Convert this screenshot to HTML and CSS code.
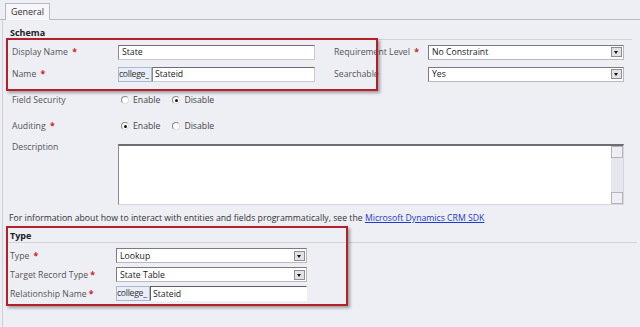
FILE: index.html
```html
<!DOCTYPE html>
<html lang="en">
<head>
    <meta charset="UTF-8">
    <title>Field - General</title>
    <link rel="stylesheet" href="styles.css">
</head>
<body>
    <div class="tabs">
        <div class="tab">General</div>
    </div>

    <div class="panel">
        <div class="section-title">Schema</div>
        <div class="section-line"></div>

        <div class="schema-rows">
            <div class="row">
                <div class="label">Display Name <span class="req">*</span></div>
                <div class="input w-main"><span class="val">State</span></div>
                <div class="label label-right">Requirement Level <span class="req">*</span></div>
                <div class="select w-right"><span class="val">No Constraint</span><span class="arrow"></span></div>
            </div>
            <div class="row">
                <div class="label">Name <span class="req">*</span></div>
                <div class="prefixed w-main">
                    <span class="prefix">college_</span>
                    <div class="input grow"><span class="val">Stateid</span></div>
                </div>
                <div class="label label-right">Searchable</div>
                <div class="select w-right"><span class="val">Yes</span><span class="arrow"></span></div>
            </div>
        </div>

        <div class="row radio-row first-radio">
            <div class="label">Field Security</div>
            <div class="radios">
                <span class="radio"></span><span class="radio-text">Enable</span>
                <span class="radio checked"></span><span class="radio-text">Disable</span>
            </div>
        </div>
        <div class="row radio-row">
            <div class="label">Auditing <span class="req">*</span></div>
            <div class="radios">
                <span class="radio checked"></span><span class="radio-text">Enable</span>
                <span class="radio"></span><span class="radio-text">Disable</span>
            </div>
        </div>

        <div class="row desc-row">
            <div class="label">Description</div>
            <div class="textarea">
                <div class="scroll">
                    <span class="scroll-btn"></span>
                    <span class="scroll-btn"></span>
                </div>
            </div>
        </div>

        <p class="info">For information about how to interact with entities and fields programmatically, see the <a href="#">Microsoft Dynamics CRM SDK</a></p>

        <div class="type-section">
            <div class="section-title type-title">Type</div>
            <div class="section-line type-line"></div>
            <div class="type-row">
                <div class="label">Type <span class="req">*</span></div>
                <div class="select w-type"><span class="val">Lookup</span><span class="arrow"></span></div>
            </div>
            <div class="type-row">
                <div class="label">Target Record Type<span class="req">*</span></div>
                <div class="select w-type"><span class="val">State Table</span><span class="arrow"></span></div>
            </div>
            <div class="type-row">
                <div class="label">Relationship Name<span class="req">*</span></div>
                <div class="prefixed w-type">
                    <span class="prefix">college_</span>
                    <div class="input grow plain"><span class="val">Stateid</span></div>
                </div>
            </div>
        </div>

        <!-- annotation boxes drawn over the form -->
        <div class="highlight hl-schema"></div>
        <div class="highlight hl-type"></div>
    </div>
</body>
</html>
```

FILE: styles.css
```css
body {
    margin: 0;
    background-color: #eeeef5;
    font-family: 'Open Sans', 'Noto Sans', sans-serif;
    font-size: 8.7px;
    color: #444;
    width: 640px;
    height: 327px;
    overflow: hidden;
}
.tabs {
    height: 19px;
    border-bottom: 1px solid #b9b9c4;
    padding-left: 5px;
    display: flex;
    align-items: flex-end;
}
.tab {
    width: 43px;
    height: 16px;
    margin-bottom: -1px;
    border: 1px solid #b9b9c4;
    border-bottom: none;
    background-color: #f7f7fb;
    color: #333;
    font-size: 9px;
    line-height: 16px;
    text-align: center;
}
.panel {
    position: relative;
    border-left: 1px solid #cfcfd8;
    margin-left: 2px;
    height: 307px;
}
.section-title {
    font-weight: bold;
    color: #222;
    padding: 7px 0 0 7px;
    height: 12px;
    line-height: 12px;
    font-size: 9px;
}
.section-line {
    height: 1px;
    background-color: #d2d2da;
    margin: 0 8px 0 3px;
}
.schema-rows {
    padding-top: 1px;
}
.row {
    display: flex;
    align-items: center;
    height: 22px;
    padding-left: 9px;
}
.label {
    width: 106px;
    flex: none;
    color: #555;
}
.label-right {
    width: 94px;
    margin-left: 19px;
}
.req {
    color: #d0202a;
    font-weight: bold;
    margin-left: 2px;
}
.w-main { width: 197px; }
.w-right { width: 196px; }
.w-type { width: 191px; }
.input, .select {
    box-sizing: border-box;
    height: 15px;
    background-color: #fff;
    border: 1px solid #c9c9cf;
    border-top-color: #6c6c72;
    border-left-color: #8a8a90;
    display: flex;
    align-items: center;
    padding-left: 3px;
    color: #222;
    font-size: 8.7px;
    flex: none;
}
.select {
    border-color: #7a7a80;
    border-bottom-color: #b8b8be;
    border-right-color: #b8b8be;
    justify-content: space-between;
    padding-right: 1px;
}
.arrow {
    width: 11px;
    height: 10px;
    box-sizing: border-box;
    border: 1px solid #8d8d93;
    background-color: #e2e2e6;
    position: relative;
}
.arrow::after {
    content: "";
    position: absolute;
    left: 2px;
    top: 3px;
    border-left: 2.5px solid transparent;
    border-right: 2.5px solid transparent;
    border-top: 3px solid #111;
}
.prefixed {
    display: flex;
    height: 15px;
    flex: none;
}
.prefix {
    box-sizing: border-box;
    width: 34px;
    height: 15px;
    background-color: #e9eef8;
    border: 1px solid #a9b7d2;
    color: #333;
    font-size: 8.7px;
    line-height: 13px;
    letter-spacing: -0.3px;
    white-space: nowrap;
    overflow: visible;
    flex: none;
}
.prefixed .input {
    padding-left: 2px;
}
.grow {
    flex: 1;
}
.plain {
    border-top-color: #5d5d62;
    border-left-color: #5d5d62;
    border-right-color: #fff;
    border-bottom-color: #fff;
}
.radio-row {
    height: 26px;
}
.first-radio {
    margin-top: 2px;
}
.radios {
    display: flex;
    align-items: center;
    padding-left: 3px;
}
.radio {
    box-sizing: border-box;
    width: 8px;
    height: 8px;
    border-radius: 50%;
    border: 1px solid #8a8a8a;
    border-right-color: #e0e0e0;
    border-bottom-color: #e0e0e0;
    background-color: #fff;
    position: relative;
    margin-right: 4px;
}
.radio.checked::after {
    content: "";
    position: absolute;
    left: 1.5px;
    top: 1.5px;
    width: 3px;
    height: 3px;
    border-radius: 50%;
    background-color: #111;
}
.radio-text {
    color: #444;
    margin-right: 12px;
}
.desc-row {
    height: auto;
    align-items: flex-start;
    margin-top: 5px;
}
.desc-row .label {
    margin-top: -3px;
}
.textarea {
    box-sizing: border-box;
    width: 506px;
    height: 61px;
    background-color: #fff;
    border: 1px solid #d6d6dc;
    border-top: 2px solid #6c6c72;
    border-left-color: #8a8a90;
    display: flex;
    justify-content: flex-end;
}
.scroll {
    width: 12px;
    background-color: #e6e6ee;
    display: flex;
    flex-direction: column;
    justify-content: space-between;
}
.scroll-btn {
    box-sizing: border-box;
    height: 12px;
    border: 1px solid #b3b3bb;
    background-color: #eeeef4;
}
.info {
    margin: 7px 0 0 6px;
    color: #333;
    line-height: 12px;
}
.info a {
    color: #1b3cc8;
}
.type-section {
    margin-top: 3px;
}
.type-title {
    padding-top: 3px;
    padding-left: 7px;
}
.type-line {
    margin-right: 3px;
    margin-bottom: 3px;
}
.type-row {
    display: flex;
    align-items: center;
    height: 19px;
    padding-left: 7px;
}
.highlight {
    position: absolute;
    border: 2px solid #b32028;
    box-shadow: 2px 2px 3px rgba(0, 0, 0, 0.35);
    pointer-events: none;
}
.hl-schema {
    left: 3px;
    top: 18px;
    width: 368px;
    height: 49px;
}
.hl-type {
    left: 3px;
    top: 206px;
    width: 338px;
    height: 76px;
}
```
